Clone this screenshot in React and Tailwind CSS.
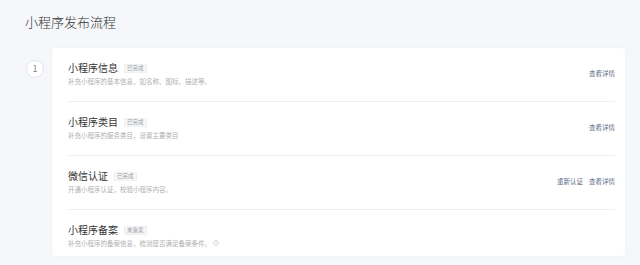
import React from "react";

const steps = [
  {
    title: "小程序信息",
    badge: "已完成",
    desc: "补充小程序的基本信息，如名称、图标、描述等。",
    links: ["查看详情"],
  },
  {
    title: "小程序类目",
    badge: "已完成",
    desc: "补充小程序的服务类目，设置主要类目",
    links: ["查看详情"],
  },
  {
    title: "微信认证",
    badge: "已完成",
    desc: "开通小程序认证，校验小程序内容。",
    links: ["重新认证", "查看详情"],
  },
  {
    title: "小程序备案",
    badge: "未备案",
    desc: "补充小程序的备案信息，检测是否满足备案条件。",
    links: [],
    help: true,
  },
];

export default function App() {
  return (
    <div className="w-[640px] h-[265px] overflow-hidden bg-[#f5f7fa] font-['Noto_Sans_CJK_SC','Noto_Sans',sans-serif]">
      {/* Page title */}
      <h1 className="pl-[25px] pt-[13px] text-[13px] leading-[17px] font-light text-[#333]">小程序发布流程</h1>

      <div className="flex pl-[26px] pr-[15px] mt-[18px]">
        {/* Step number */}
        <div className="w-[18px] h-[18px] mt-[12px] rounded-full border border-[#e3e6eb] bg-white flex items-center justify-center text-[9px] text-[#888] shrink-0">
          1
        </div>

        {/* Steps card */}
        <div className="ml-[8px] flex-1 bg-white rounded-[4px] pl-[16px] pr-[10px] shadow-[0_0_3px_rgba(0,0,0,0.04)]">
          {steps.map((s, i) => (
            <div
              key={s.title}
              className={
                "flex items-center " +
                (i < steps.length - 1 ? "pt-[13px] pb-[15px] border-b border-[#eef0f3]" : "pt-[13px] pb-[8px]")
              }
            >
              <div className="flex-1">
                <div className="flex items-center h-[14px]">
                  <span className="text-[10px] leading-[14px] text-[#333]">{s.title}</span>
                  <span className="ml-[6px] px-[2px] text-[5.5px] leading-[7px] border border-[#eef0f2] bg-[#f5f6f8] text-[#a0a0a0]">
                    {s.badge}
                  </span>
                </div>
                <div className="mt-[1px] flex items-center h-[10px] text-[6.5px] leading-[10px] text-[#b0b0b0]">
                  {s.desc}
                  {s.help && (
                    <svg className="ml-[2px]" width="6" height="6" viewBox="0 0 12 12" fill="none">
                      <circle cx="6" cy="6" r="5" stroke="#bbb" strokeWidth="1" />
                      <path d="M4.6 4.7a1.4 1.4 0 1 1 1.9 1.3c-.4.2-.5.4-.5.9" stroke="#bbb" strokeWidth="1" />
                      <circle cx="6" cy="8.7" r=".6" fill="#bbb" />
                    </svg>
                  )}
                </div>
              </div>
              <div className="flex gap-[6px] text-[6.5px] text-[#5b6b85]">
                {s.links.map((l) => (
                  <span key={l}>{l}</span>
                ))}
              </div>
            </div>
          ))}
        </div>
      </div>
    </div>
  );
}
